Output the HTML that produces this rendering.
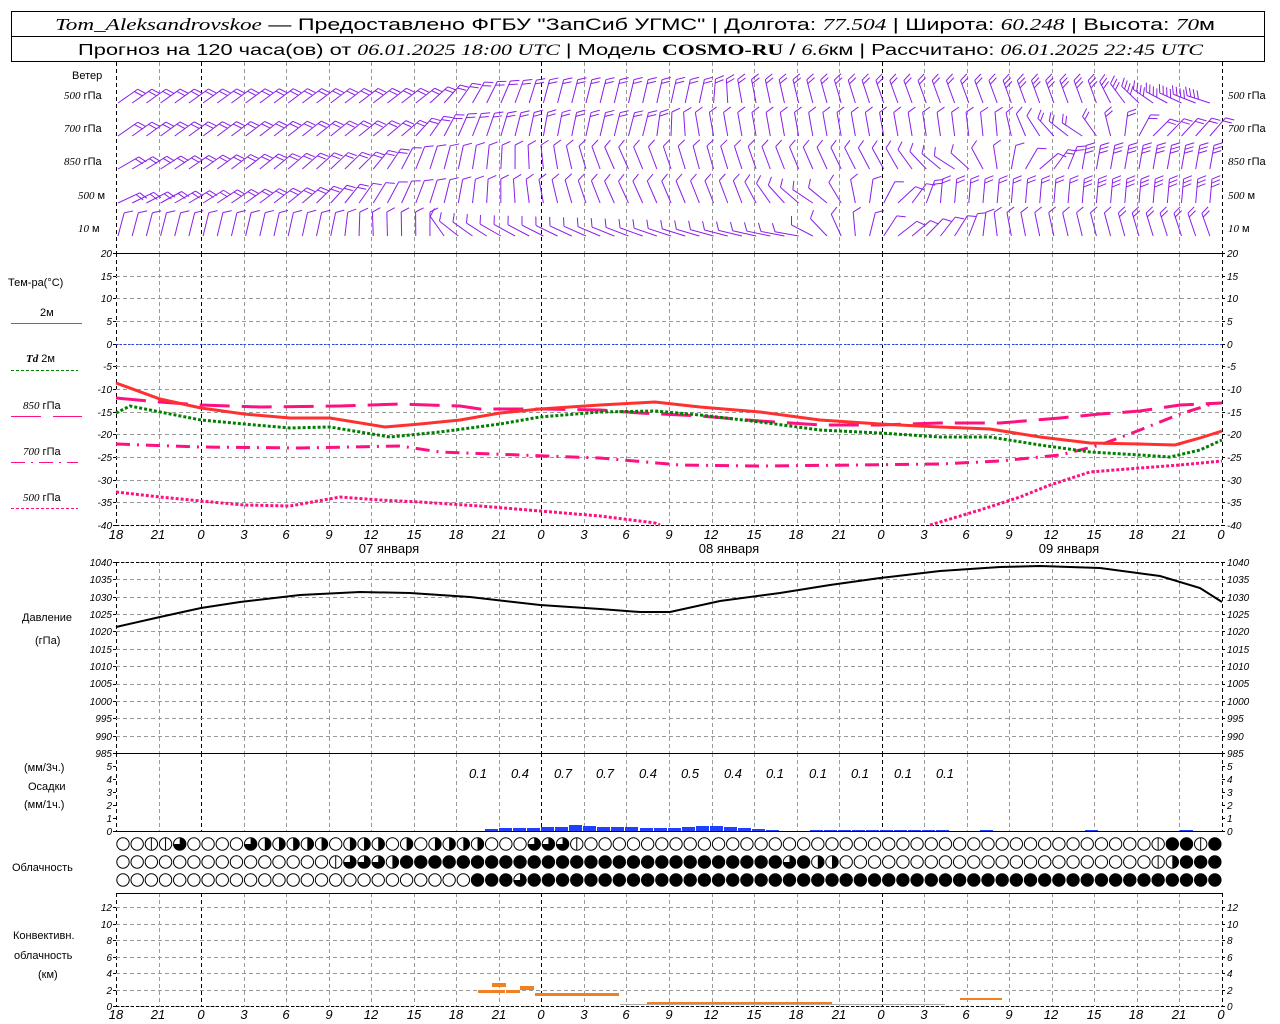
<!DOCTYPE html>
<html><head><meta charset="utf-8">
<style>
html,body{margin:0;padding:0;background:#fff;}
svg{display:block;}
text{font-family:"Liberation Sans","DejaVu Sans",sans-serif;}
.t{font-size:11px;fill:#000;}
.ax{font-size:10px;font-style:italic;fill:#000;font-family:"Liberation Sans",sans-serif;}
.xl{font-size:13px;font-style:italic;fill:#000;}
.it{font-family:"Liberation Serif",serif;font-style:italic;}
</style></head>
<body>
<svg id="s" width="1280" height="1024" viewBox="0 0 1280 1024" xmlns="http://www.w3.org/2000/svg">
<rect x="0" y="0" width="1280" height="1024" fill="#fff"/>
<g id="grid"></g>
<rect x="11.5" y="11.5" width="1253" height="50" fill="none" stroke="#000"/>
<line x1="11" y1="36.5" x2="1265" y2="36.5" stroke="#000"/>
<text x="55" y="30" font-size="17" textLength="1160" lengthAdjust="spacingAndGlyphs"><tspan class="it">Tom_Aleksandrovskoe</tspan> — Предоставлено ФГБУ "ЗапСиб УГМС" | Долгота: <tspan class="it">77.504</tspan> | Широта: <tspan class="it">60.248</tspan> | Высота: <tspan class="it">70</tspan>м</text>
<text x="78" y="55" font-size="16" textLength="1125" lengthAdjust="spacingAndGlyphs">Прогноз на 120 часа(ов) от <tspan class="it">06.01.2025 18:00 UTC</tspan>  | Модель <tspan font-family="Liberation Serif" font-weight="bold">COSMO-RU</tspan> / <tspan class="it">6.6</tspan>км | Рассчитано: <tspan class="it">06.01.2025 22:45 UTC</tspan></text>

<text class="t" x="72" y="79">Ветер</text>
<text class="t" x="64" y="99" font-size="10"><tspan class="it">500</tspan> гПа</text>
<text class="t" x="64" y="132" font-size="10"><tspan class="it">700</tspan> гПа</text>
<text class="t" x="64" y="165" font-size="10"><tspan class="it">850</tspan> гПа</text>
<text class="t" x="78" y="199" font-size="10"><tspan class="it">500</tspan> м</text>
<text class="t" x="78" y="232" font-size="10"><tspan class="it">10</tspan>   м</text>
<text class="t" x="1228" y="99" font-size="10"><tspan class="it">500</tspan> гПа</text>
<text class="t" x="1228" y="132" font-size="10"><tspan class="it">700</tspan> гПа</text>
<text class="t" x="1228" y="165" font-size="10"><tspan class="it">850</tspan> гПа</text>
<text class="t" x="1228" y="199" font-size="10"><tspan class="it">500</tspan> м</text>
<text class="t" x="1228" y="232" font-size="10"><tspan class="it">10</tspan>   м</text>

<text class="t" x="8" y="286" font-size="12">Тем-ра(°C)</text>
<text class="t" x="40" y="316">2м</text>
<line x1="11" y1="323.5" x2="82" y2="323.5" stroke="#ff3030" stroke-width="1"/>
<text class="t" x="26" y="362"><tspan class="it" font-weight="bold">Td</tspan>  2м</text>
<line x1="11" y1="370.5" x2="78" y2="370.5" stroke="#008000" stroke-dasharray="3,2"/>
<text class="t" x="23" y="409"><tspan class="it">850</tspan> гПа</text>
<line x1="11" y1="416.5" x2="82" y2="416.5" stroke="#ff1080" stroke-dasharray="30,12"/>
<text class="t" x="23" y="455"><tspan class="it">700</tspan> гПа</text>
<line x1="11" y1="462.5" x2="78" y2="462.5" stroke="#ff1080" stroke-dasharray="14,6,2,6"/>
<text class="t" x="23" y="501"><tspan class="it">500</tspan> гПа</text>
<line x1="11" y1="508.5" x2="78" y2="508.5" stroke="#ff1080" stroke-dasharray="3,2"/>

<text class="t" x="22" y="621" font-size="12">Давление</text>
<text class="t" x="35" y="644" font-size="12">(гПа)</text>
<text class="t" x="24" y="771" font-size="12">(мм/3ч.)</text>
<text class="t" x="28" y="790" font-size="12">Осадки</text>
<text class="t" x="24" y="808" font-size="12">(мм/1ч.)</text>
<text class="t" x="12" y="871" font-size="12">Облачность</text>
<text class="t" x="13" y="939" font-size="12">Конвективн.</text>
<text class="t" x="14" y="959" font-size="12">облачность</text>
<text class="t" x="38" y="978" font-size="12">(км)</text>

<text x="389" y="553" font-size="13" text-anchor="middle">07 января</text>
<text x="729" y="553" font-size="13" text-anchor="middle">08 января</text>
<text x="1069" y="553" font-size="13" text-anchor="middle">09 января</text>

<g class="xl" text-anchor="middle">
<g>
<text x="116" y="539">18</text><text x="158" y="539">21</text><text x="201" y="539">0</text><text x="244" y="539">3</text><text x="286" y="539">6</text><text x="329" y="539">9</text><text x="371" y="539">12</text><text x="414" y="539">15</text><text x="456" y="539">18</text><text x="499" y="539">21</text><text x="541" y="539">0</text><text x="584" y="539">3</text><text x="626" y="539">6</text><text x="669" y="539">9</text><text x="711" y="539">12</text><text x="754" y="539">15</text><text x="796" y="539">18</text><text x="839" y="539">21</text><text x="881" y="539">0</text><text x="924" y="539">3</text><text x="966" y="539">6</text><text x="1009" y="539">9</text><text x="1051" y="539">12</text><text x="1094" y="539">15</text><text x="1136" y="539">18</text><text x="1179" y="539">21</text><text x="1221" y="539">0</text>
</g>
<g transform="translate(0,480)">
<text x="116" y="539">18</text><text x="158" y="539">21</text><text x="201" y="539">0</text><text x="244" y="539">3</text><text x="286" y="539">6</text><text x="329" y="539">9</text><text x="371" y="539">12</text><text x="414" y="539">15</text><text x="456" y="539">18</text><text x="499" y="539">21</text><text x="541" y="539">0</text><text x="584" y="539">3</text><text x="626" y="539">6</text><text x="669" y="539">9</text><text x="711" y="539">12</text><text x="754" y="539">15</text><text x="796" y="539">18</text><text x="839" y="539">21</text><text x="881" y="539">0</text><text x="924" y="539">3</text><text x="966" y="539">6</text><text x="1009" y="539">9</text><text x="1051" y="539">12</text><text x="1094" y="539">15</text><text x="1136" y="539">18</text><text x="1179" y="539">21</text><text x="1221" y="539">0</text>
</g>
</g>

<g class="ax">
<g text-anchor="end">
<text x="112" y="257">20</text><text x="112" y="280">15</text><text x="112" y="302">10</text><text x="112" y="325">5</text><text x="112" y="348">0</text><text x="112" y="370">-5</text><text x="112" y="393">-10</text><text x="112" y="416">-15</text><text x="112" y="438">-20</text><text x="112" y="461">-25</text><text x="112" y="484">-30</text><text x="112" y="506">-35</text><text x="112" y="529">-40</text>
<text x="112" y="566">1040</text><text x="112" y="583">1035</text><text x="112" y="601">1030</text><text x="112" y="618">1025</text><text x="112" y="635">1020</text><text x="112" y="653">1015</text><text x="112" y="670">1010</text><text x="112" y="687">1005</text><text x="112" y="705">1000</text><text x="112" y="722">995</text><text x="112" y="740">990</text><text x="112" y="757">985</text>
<text x="112" y="770">5</text><text x="112" y="783">4</text><text x="112" y="796">3</text><text x="112" y="809">2</text><text x="112" y="822">1</text><text x="112" y="835">0</text>
<text x="112" y="911">12</text><text x="112" y="928">10</text><text x="112" y="944">8</text><text x="112" y="961">6</text><text x="112" y="977">4</text><text x="112" y="994">2</text><text x="112" y="1010">0</text>
</g>
<g>
<text x="1227" y="257">20</text><text x="1227" y="280">15</text><text x="1227" y="302">10</text><text x="1227" y="325">5</text><text x="1227" y="348">0</text><text x="1227" y="370">-5</text><text x="1227" y="393">-10</text><text x="1227" y="416">-15</text><text x="1227" y="438">-20</text><text x="1227" y="461">-25</text><text x="1227" y="484">-30</text><text x="1227" y="506">-35</text><text x="1227" y="529">-40</text>
<text x="1227" y="566">1040</text><text x="1227" y="583">1035</text><text x="1227" y="601">1030</text><text x="1227" y="618">1025</text><text x="1227" y="635">1020</text><text x="1227" y="653">1015</text><text x="1227" y="670">1010</text><text x="1227" y="687">1005</text><text x="1227" y="705">1000</text><text x="1227" y="722">995</text><text x="1227" y="740">990</text><text x="1227" y="757">985</text>
<text x="1227" y="770">5</text><text x="1227" y="783">4</text><text x="1227" y="796">3</text><text x="1227" y="809">2</text><text x="1227" y="822">1</text><text x="1227" y="835">0</text>
<text x="1227" y="911">12</text><text x="1227" y="928">10</text><text x="1227" y="944">8</text><text x="1227" y="961">6</text><text x="1227" y="977">4</text><text x="1227" y="994">2</text><text x="1227" y="1010">0</text>
</g>
</g>

<g font-size="13" font-style="italic" text-anchor="middle">
<text x="478" y="778">0.1</text><text x="520" y="778">0.4</text><text x="563" y="778">0.7</text><text x="605" y="778">0.7</text><text x="648" y="778">0.4</text><text x="690" y="778">0.5</text><text x="733" y="778">0.4</text><text x="775" y="778">0.1</text><text x="818" y="778">0.1</text><text x="860" y="778">0.1</text><text x="903" y="778">0.1</text><text x="945" y="778">0.1</text>
</g>
<g id="dyn"></g>
</svg>
<script>
(function(){
var NS="http://www.w3.org/2000/svg";
var G=document.getElementById('grid'), D=document.getElementById('dyn');
function el(p,tag,a){var e=document.createElementNS(NS,tag);for(var k in a)e.setAttribute(k,a[k]);p.appendChild(e);return e;}
var X0=116,X1=1222,PH=(X1-X0)/78;
function X(h){return X0+h*PH;}
var panels=[[62,253],[253,525],[562,753],[753,831],[893,1006]];
for(var i=0;i<=26;i++){
 var x=Math.round(X(i*3))+0.5, day=(i%8==2);
 panels.forEach(function(p){
  el(G,'line',{x1:x,y1:p[0],x2:x,y2:p[1],stroke:(day||i==0||i==26)?'#000':'#999','stroke-dasharray':'4,3','stroke-width':1});
 });
}
function hg(y0,y1,n){for(var k=0;k<=n;k++){var y=Math.round(y0+(y1-y0)*k/n)+0.5;el(G,'line',{x1:X0,y1:y,x2:X1,y2:y,stroke:'#999','stroke-dasharray':'4,3'});}}
hg(253,525,12);hg(562,753,11);hg(907,1006,6);
el(G,'line',{x1:X0,y1:344.5,x2:X1,y2:344.5,stroke:'#2040ff','stroke-dasharray':'2,2'});
function hl(y,dash){el(G,'line',{x1:X0,y1:y+0.5,x2:X1,y2:y+0.5,stroke:'#000','stroke-dasharray':dash?'3,2':'none'});}
hl(253,false);hl(525,true);hl(562,true);hl(753,false);hl(831,false);hl(893,false);hl(1006,true);
function ticks(y0,y1,n){for(var k=0;k<=n;k++){var y=Math.round(y0+(y1-y0)*k/n)+0.5;el(G,'line',{x1:X0-3,y1:y,x2:X0,y2:y,stroke:'#000'});el(G,'line',{x1:X1,y1:y,x2:X1+3,y2:y,stroke:'#000'});}}
ticks(253,525,12);ticks(562,753,11);ticks(766,831,5);ticks(907,1006,6);
function pl(pts,attrs){var s=pts.map(function(p){return p[0]+','+p[1];}).join(' ');attrs.points=s;attrs.fill='none';el(D,'polyline',attrs);}
pl([[116,627],[160,617],[201,608],[240,602],[300,595],[360,592],[410,593],[470,597],[540,605],[600,609],[640,612],[670,612],[720,601],[780,593],[830,585],[880,578],[940,571],[1000,567],[1040,566],[1100,568],[1160,576],[1200,588],[1222,602]],{stroke:'#000','stroke-width':2});
pl([[116,398],[160,402],[201,405],[260,407],[340,406],[400,404],[460,406],[480,409],[540,409],[600,410],[640,413],[700,416],[760,421],[820,425],[880,425],[940,423],[1000,423],[1060,418],[1100,414],[1140,411],[1180,405],[1222,403]],{stroke:'#ff1080','stroke-width':3,'stroke-dasharray':'30,12'});
pl([[116,444],[200,447],[300,448],[400,446],[440,452],[520,455],[600,458],[680,465],[760,466],[860,465],[940,464],[1000,461],[1060,455],[1100,445],[1140,430],[1180,414],[1212,404]],{stroke:'#ff1080','stroke-width':3,'stroke-dasharray':'14,7,2,7'});
pl([[116,492],[160,497],[201,501],[244,505],[290,506],[340,497],[380,500],[420,502],[480,506],[540,511],[600,516],[655,523],[660,525]],{stroke:'#ff1080','stroke-width':3,'stroke-dasharray':'3,2'});
pl([[930,525],[980,510],[1020,497],[1050,485],[1090,472],[1140,468],[1180,465],[1222,461]],{stroke:'#ff1080','stroke-width':3,'stroke-dasharray':'3,2'});
pl([[116,413],[130,406],[160,412],[201,420],[244,424],[290,428],[330,427],[390,437],[440,432],[500,424],[540,417],[600,412],[655,411],[700,415],[760,422],[820,430],[880,433],[940,437],[990,437],[1040,445],[1090,452],[1140,455],[1170,457],[1200,450],[1222,440]],{stroke:'#008000','stroke-width':3,'stroke-dasharray':'3,2'});
pl([[116,383],[160,399],[201,408],[244,414],[290,418],[330,418],[385,427],[420,424],[460,420],[500,413],[540,409],[600,405],[655,402],[700,407],[760,412],[820,420],[880,424],[940,427],[990,429],[1040,437],[1090,443],[1140,444],[1175,445],[1200,438],[1222,431]],{stroke:'#ff3030','stroke-width':3});
var pb=[[485,2],[499,3],[513,3],[527,3],[541,4],[555,4],[569,6],[583,5],[597,4],[611,4],[625,4],[640,3],[654,3],[668,3],[682,4],[696,5],[710,5],[724,4],[738,3],[752,2],[766,1],[810,1],[824,1],[838,1],[852,1],[866,1],[880,1],[894,1],[908,1],[922,1],[936,1],[980,1],[1085,1],[1180,1]];
pb.forEach(function(b){el(D,'rect',{x:b[0],y:831-b[1],width:13,height:b[1],fill:'#2040ff'});});
[[478,505,990,3],[492,506,983,4],[506,520,990,3],[520,534,986,4],[535,619,993,3],[647,832,1002,2],[620,945,1004,1],[960,1002,998,2]].forEach(function(c){el(D,'rect',{x:c[0],y:c[2],width:c[1]-c[0],height:c[3],fill:c[2]==1004?'#aaa':'#f08020'});});
function rep(c,n){return new Array(n+1).join(c);}
var rows=[
 "oovvqoooo"+"qhhhhhohhhohohhhhoooqqqvo"+rep('o',39)+"vffvf",
 rep('o',15)+"vqqqh"+rep('f',27)+"qfhh"+rep('o',22)+"vhfff",
 rep('o',25)+"fffq"+rep('f',49)];
var cy=[844,862,880];
for(var r=0;r<3;r++){for(var i=0;i<78;i++){
 var cx=123+i*14.18,ch=rows[r][i]||'f',y=cy[r];
 if(ch=='f'){el(D,'ellipse',{cx:cx,cy:y,rx:6.7,ry:6.7,fill:'#000'});continue;}
 el(D,'ellipse',{cx:cx,cy:y,rx:6.2,ry:6.2,fill:'#fff',stroke:'#000','stroke-width':1});
 if(ch=='v'){el(D,'line',{x1:cx,y1:y-6,x2:cx,y2:y+6,stroke:'#000'});}
 if(ch=='h'){el(D,'path',{d:'M'+cx+','+(y-6.5)+' A6.5,6.5 0 0 1 '+cx+','+(y+6.5)+' Z',fill:'#000'});}
 if(ch=='q'){el(D,'path',{d:'M'+cx+','+y+' L'+cx+','+(y-6.5)+' A6.5,6.5 0 1 1 '+(cx-6.5)+','+y+' Z',fill:'#000'});}
}}
var W=[
 {y:103,a:[[116,35,2],[420,38,2],[470,60,2],[540,75,2],[700,78,2],[740,100,2],[900,110,2],[1100,110,3],[1160,150,4],[1222,165,4]]},
 {y:136,a:[[116,35,2],[400,40,2],[450,65,2],[540,80,2],[640,75,2],[700,100,1],[900,100,1],[1000,95,1],[1080,150,2],[1150,45,2],[1222,50,2]]},
 {y:169,a:[[116,30,2],[360,45,2],[420,70,1],[540,95,1],[620,115,1],[700,105,1],[900,120,1],[960,150,1],[1040,40,1],[1080,80,3],[1222,80,3]]},
 {y:203,a:[[116,25,2],[300,40,2],[400,65,1],[540,100,1],[620,115,1],[740,110,1],[820,150,1],[900,40,1],[940,85,2],[1222,85,3]]},
 {y:236,a:[[116,75,1],[330,78,1],[370,92,1],[430,90,1],[450,140,1],[500,150,1],[640,160,1],[800,170,1],[900,35,1],[960,60,1],[1000,100,1],[1222,110,2]]}
];
var col='#8a1ee8';
W.forEach(function(row){
 for(var i=0;i<78;i++){
  var x=118+i*14.18,a=row.a,k=0;
  while(k<a.length-2&&a[k+1][0]<x)k++;
  var t=Math.max(0,Math.min(1,(x-a[k][0])/(a[k+1][0]-a[k][0])));
  var ang=(a[k][1]+(a[k+1][1]-a[k][1])*t)*Math.PI/180;
  var nf=Math.round(a[k][2]+(a[k+1][2]-a[k][2])*t);
  var L=24,bx=x,by=row.y;
  var ex=bx+L*Math.cos(ang),ey=by-L*Math.sin(ang);
  el(D,'line',{x1:bx,y1:by,x2:ex,y2:ey,stroke:col,'stroke-width':1});
  var fa=ang-1.1;
  for(var f=0;f<nf;f++){
   var sx=ex-(f*4)*Math.cos(ang),sy=ey+(f*4)*Math.sin(ang);
   el(D,'line',{x1:sx,y1:sy,x2:sx+9*Math.cos(fa),y2:sy-9*Math.sin(fa),stroke:col,'stroke-width':1});
  }
 }
});
})();
</script>
</body></html>
